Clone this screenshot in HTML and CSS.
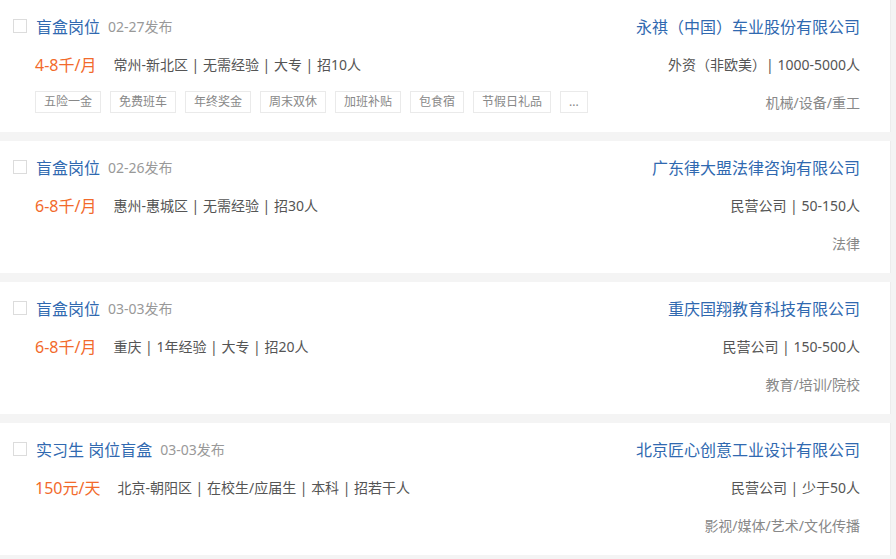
FILE: index.html
```html
<!DOCTYPE html>
<html lang="zh-CN">
<head>
  <meta charset="UTF-8" />
  <meta name="viewport" content="width=device-width, initial-scale=1.0"/>
  <title>职位列表</title>
  <link rel="stylesheet" href="styles.css">
</head>
<body>
  <div class="list">
    <div class="job">
      <div class="left">
        <div class="row">
          <span class="check"></span>
          <a class="title">盲盒岗位</a>
          <span class="date">02-27发布</span>
        </div>
        <div class="row sub">
          <span class="salary">4-8千/月</span>
          <span class="info">常州-新北区 | 无需经验 | 大专 | 招10人</span>
        </div>
        <div class="row sub">
          <span class="tag">五险一金</span>
          <span class="tag">免费班车</span>
          <span class="tag">年终奖金</span>
          <span class="tag">周末双休</span>
          <span class="tag">加班补贴</span>
          <span class="tag">包食宿</span>
          <span class="tag">节假日礼品</span>
          <span class="tag">...</span>
        </div>
      </div>
      <div class="right">
        <div class="row"><a class="company">永祺（中国）车业股份有限公司</a></div>
        <div class="row"><span class="info">外资（非欧美）| 1000-5000人</span></div>
        <div class="row"><span class="industry">机械/设备/重工</span></div>
      </div>
    </div>

    <div class="job">
      <div class="left">
        <div class="row">
          <span class="check"></span>
          <a class="title">盲盒岗位</a>
          <span class="date">02-26发布</span>
        </div>
        <div class="row sub">
          <span class="salary">6-8千/月</span>
          <span class="info">惠州-惠城区 | 无需经验 | 招30人</span>
        </div>
        <div class="row sub"></div>
      </div>
      <div class="right">
        <div class="row"><a class="company">广东律大盟法律咨询有限公司</a></div>
        <div class="row"><span class="info">民营公司 | 50-150人</span></div>
        <div class="row"><span class="industry">法律</span></div>
      </div>
    </div>

    <div class="job">
      <div class="left">
        <div class="row">
          <span class="check"></span>
          <a class="title">盲盒岗位</a>
          <span class="date">03-03发布</span>
        </div>
        <div class="row sub">
          <span class="salary">6-8千/月</span>
          <span class="info">重庆 | 1年经验 | 大专 | 招20人</span>
        </div>
        <div class="row sub"></div>
      </div>
      <div class="right">
        <div class="row"><a class="company">重庆国翔教育科技有限公司</a></div>
        <div class="row"><span class="info">民营公司 | 150-500人</span></div>
        <div class="row"><span class="industry">教育/培训/院校</span></div>
      </div>
    </div>

    <div class="job">
      <div class="left">
        <div class="row">
          <span class="check"></span>
          <a class="title">实习生 岗位盲盒</a>
          <span class="date">03-03发布</span>
        </div>
        <div class="row sub">
          <span class="salary">150元/天</span>
          <span class="info">北京-朝阳区 | 在校生/应届生 | 本科 | 招若干人</span>
        </div>
        <div class="row sub"></div>
      </div>
      <div class="right">
        <div class="row"><a class="company">北京匠心创意工业设计有限公司</a></div>
        <div class="row"><span class="info">民营公司 | 少于50人</span></div>
        <div class="row"><span class="industry">影视/媒体/艺术/文化传播</span></div>
      </div>
    </div>
  </div>
</body>
</html>
```

FILE: styles.css
```css
body {
  margin: 0;
  background: #f4f4f4;
  font-family: "Noto Sans", "Noto Sans CJK SC", sans-serif;
  color: #555;
}

.list {
  width: 891px;
}

.job {
  display: flex;
  justify-content: space-between;
  background: #fff;
  border-right: 1px solid #ececec;
  padding: 7px 30px 11px 13px;
  margin-bottom: 9px;
}

.row {
  height: 38px;
  display: flex;
  align-items: center;
}

.sub {
  padding-left: 22px;
}

.right .row {
  justify-content: flex-end;
}

.check {
  width: 12px;
  height: 12px;
  border: 1px solid #dcdcdc;
  margin-right: 9px;
}

.title,
.company {
  font-size: 16px;
  color: #3069b0;
  cursor: pointer;
}

.date {
  font-size: 14px;
  color: #999;
  margin-left: 8px;
}

.salary {
  font-size: 16px;
  color: #f26a2b;
  margin-right: 17px;
}

.info {
  font-size: 14px;
  color: #555;
}

.tag {
  font-size: 12px;
  color: #888;
  border: 1px solid #eaeaea;
  padding: 0 8px;
  height: 20px;
  line-height: 20px;
  margin-right: 9px;
}

.industry {
  font-size: 14px;
  color: #888;
}
```
